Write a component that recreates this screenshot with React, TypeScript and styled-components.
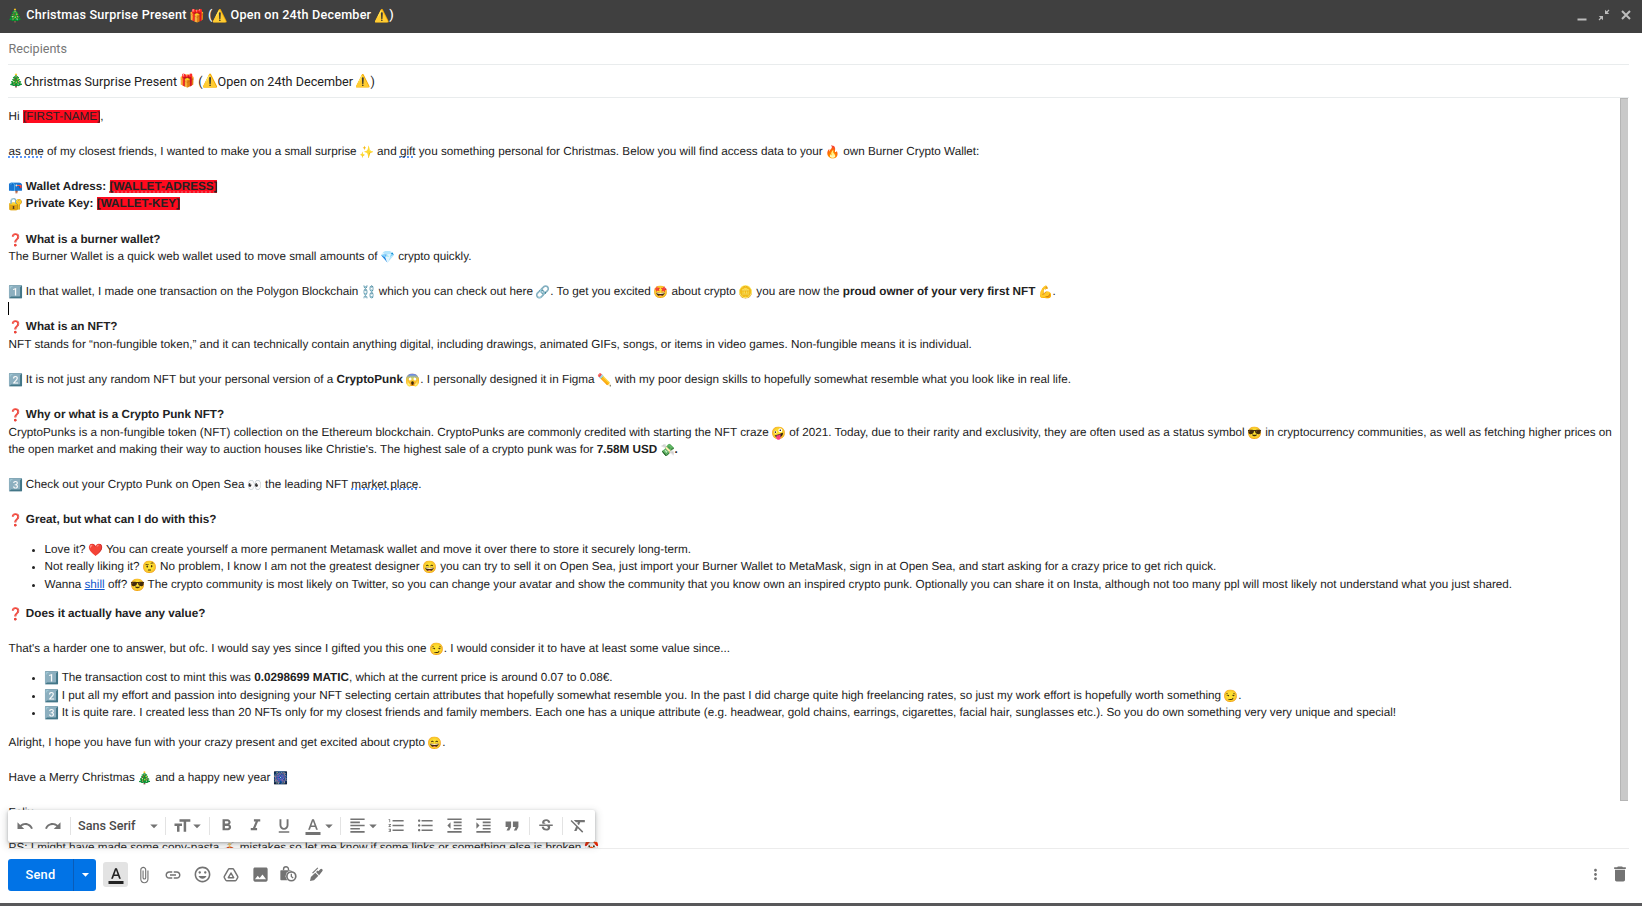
import React from 'react';
import styled, { createGlobalStyle, css } from 'styled-components';
import {
  MdUndo, MdRedo, MdFormatSize, MdFormatBold, MdFormatItalic, MdFormatUnderlined, MdFormatColorText,
  MdFormatAlignLeft, MdFormatListNumbered, MdFormatListBulleted, MdFormatIndentDecrease,
  MdFormatIndentIncrease, MdFormatQuote, MdStrikethroughS, MdFormatClear, MdArrowDropDown,
  MdAttachFile, MdLink, MdInsertPhoto, MdMoreVert, MdDelete, MdOutlineInsertEmoticon,
} from 'react-icons/md';

const GlobalStyle = createGlobalStyle`
  * { box-sizing: border-box; }
  body { margin: 0; background: #fff; overflow: hidden; }
`;

const Window = styled.div`
  display: flex;
  flex-direction: column;
  width: 1642px;
  height: 906px;
  background: #fff;
  border-bottom: 3px solid #58585a;
  color: #222;
  font-family: Roboto, "Liberation Sans", sans-serif;
`;

const TitleBar = styled.header`
  display: flex;
  align-items: center;
  justify-content: space-between;
  flex: none;
  height: 33px;
  padding: 0 9px 3px 8px;
  background: #404040;
  color: #fff;
`;

const Title = styled.h1`
  margin: 0;
  font-size: 12.6px;
  font-weight: 500;
  letter-spacing: 0.22px;
  line-height: 20px;
  white-space: pre;
`;

const WindowControls = styled.div`
  display: flex;
  align-items: center;
  gap: 8px;
  color: #bdbdbd;
  svg { display: block; width: 14px; height: 14px; }
`;

const Fields = styled.div`
  flex: none;
  margin: 0 13px 0 8px;
`;

const Field = styled.div<{ $placeholder?: boolean; $height: number }>`
  display: flex;
  align-items: center;
  height: ${p => p.$height}px;
  padding-left: ${p => (p.$placeholder ? 0.5 : 1)}px;
  border-bottom: 1px solid #e9eced;
  color: ${p => (p.$placeholder ? '#777' : '#222')};
  font-size: 12.6px;
  white-space: pre;
`;

const Body = styled.main`
  display: flex;
  flex: 1;
  min-height: 0;
  margin: 0 14px 0 8px;
  overflow: hidden;
`;

const Message = styled.article`
  flex: 1;
  padding: 10px 0 0 0.6px;
  font-family: "Liberation Sans", Arial, sans-serif;
  font-size: 11.71px;
  line-height: 17.5px;
  white-space: pre;
  text-rendering: geometricPrecision;
`;

const Line = styled.div<{ $height?: number }>`
  height: ${p => p.$height ?? 17.5}px;
`;

const List = styled.ul<{ $before: number; $after: number }>`
  margin: ${p => p.$before}px 0 ${p => p.$after}px;
  padding-left: 36px;
  li { height: 17.5px; }
`;

const Emoji = styled.span<{ $size?: number }>`
  display: inline-flex;
  align-items: center;
  justify-content: center;
  width: ${p => p.$size ?? 14}px;
  height: 14px;
  font-family: "Noto Color Emoji", sans-serif;
  font-size: ${p => (p.$size ?? 14) * 0.86}px;
  font-weight: 400;
  line-height: 14px;
  letter-spacing: 0;
  vertical-align: -1px;
`;

const Marked = styled.span`
  background: #ff0a1e;
`;

const hint = (color: string) => css`
  text-decoration: underline dotted ${color} 1.5px;
  text-underline-offset: 1px;
  text-decoration-skip-ink: none;
`;

const Grammar = styled.span`${hint('#5b97f7')}`;
const Misspelt = styled.span`${hint('#f0424f')}`;

const Link = styled.a`
  color: #15c;
  text-decoration: underline;
`;

const Caret = styled.span`
  display: inline-block;
  width: 1px;
  height: 13px;
  margin-left: -0.6px;
  background: #000;
  vertical-align: -2px;
`;

const ScrollThumb = styled.div`
  flex: none;
  width: 8px;
  height: 703px;
  border: solid #b5b5b5;
  border-width: 1px 0 1px 1px;
  background: #c9c9c9;
`;

const Footer = styled.footer`
  position: relative;
  flex: none;
  height: 55px;
  margin: 0 13px 0 8px;
  border-top: 1px solid #ececec;
`;

const FormatBar = styled.div`
  position: absolute;
  left: 0;
  top: -39px;
  display: flex;
  align-items: center;
  width: 587px;
  height: 32px;
  padding: 0 0 1px 3px;
  border-radius: 2px;
  background: #fff;
  box-shadow: 0 1px 3px rgba(60, 64, 67, 0.35), 0 3px 7px 2px rgba(60, 64, 67, 0.17);
  color: #737373;
`;

const Tool = styled.span<{ $w?: number; $icon?: number }>`
  display: flex;
  align-items: center;
  justify-content: center;
  flex: none;
  width: ${p => p.$w ?? 29}px;
  svg { flex: none; width: ${p => p.$icon ?? 18}px; height: ${p => p.$icon ?? 18}px; }
`;

const MenuArrow = styled(Tool)`
  margin-left: -6px;
`;

const Divider = styled.span`
  flex: none;
  width: 1px;
  height: 18px;
  margin: 0 3px;
  background: #e3e3e3;
`;

const FontName = styled.span`
  width: 77.5px;
  padding-left: 4px;
  color: #4a4a4a;
  font-size: 12.6px;
  font-weight: 500;
  white-space: nowrap;
`;

const Actions = styled.div`
  display: flex;
  align-items: center;
  padding-top: 9.5px;
  color: #737373;
`;

const SendButton = styled.button`
  display: flex;
  flex: none;
  width: 88px;
  height: 32px;
  margin-right: 7px;
  padding: 0;
  border: 0;
  border-radius: 3px;
  background: #0173e6;
  color: #fff;
  font: 500 12.8px Roboto, sans-serif;
  letter-spacing: 0.3px;
`;

const SendLabel = styled.span`
  display: flex;
  align-items: center;
  justify-content: center;
  width: 66px;
  border-right: 1px solid #0a5cb8;
`;

const SendMore = styled.span`
  display: flex;
  align-items: center;
  justify-content: center;
  flex: 1;
  svg { width: 17px; height: 17px; }
`;

const ActiveTool = styled(Tool)`
  height: 25px;
  margin-right: 1.5px;
  border-radius: 3px;
  background: #e3e3e3;
  color: #222;
`;

const Spacer = styled.span`flex: 1;`;

const EndTools = styled.div`
  display: flex;
  align-items: center;
  margin: -1px -3px 0 0;
`;

const E = ({ children, s }: { children: string; s?: number }) => <Emoji $size={s}>{children}</Emoji>;

const ExitFullscreen = () => (
  <svg viewBox="0 0 14 14" fill="#bdbdbd" stroke="#bdbdbd">
    <path d="M8 1.800V6h4.200zM1.800 8H6v4.200z" stroke="none" />
    <path d="M8.500 5.500 12 2M5.500 8.500 2 12" strokeWidth="1.200" />
  </svg>
);

const Drive = () => (
  <svg viewBox="0 0 24 24" fill="none" stroke="currentColor" strokeWidth="2.200" strokeLinejoin="round">
    <path d="M9.500 2.500h5q1 0 1.500 1l6 10.500q.5 1 0 2l-2 3.500q-.5 1-1.500 1h-13q-1 0-1.500-1L2 16q-.5-1 0-2L8 3.500q.5-1 1.500-1z" />
    <path d="M12 9l4 7H8z" />
  </svg>
);

const Confidential = () => (
  <svg viewBox="0 0 24 24" fill="currentColor">
    <path d="M5 6V4.500a3.500 3.500 0 0 1 7 0V6" fill="none" stroke="currentColor" strokeWidth="2" />
    <path d="M1.500 6h14a1 1 0 0 1 1 1v13h-15a1 1 0 0 1-1-1V7a1 1 0 0 1 1-1z" />
    <circle cx="16" cy="14.500" r="8" fill="#fff" />
    <circle cx="16" cy="14.500" r="6.300" fill="#fff" stroke="currentColor" strokeWidth="2.400" />
    <path d="M16 11v3.800l2.600 2" fill="none" stroke="currentColor" strokeWidth="1.800" />
  </svg>
);

const Pen = () => (
  <svg viewBox="0 0 24 24" fill="currentColor">
    <path d="M1.500 22.500l1.500-6.500 7-7 5 5-7 7z" />
    <path d="M11.200 8l2.600-2.600 1.200 1.200 3-3a2.200 2.200 0 0 1 3.200 0 2.200 2.200 0 0 1 0 3.200L16.200 13z" />
    <path d="M14.800 2l-8.500 8.500-1.300-1.300 8.500-8.500z" />
  </svg>
);

export default function App() {
  return (
    <Window>
      <GlobalStyle />
      <TitleBar>
        <Title><E s={15}>🎄</E> Christmas Surprise Present <E s={14.6}>🎁</E> (<E s={14.6}>⚠️</E> Open on 24th December <E s={14.6}>⚠️</E>)</Title>
        <WindowControls>
          <svg viewBox="0 0 14 14"><path d="M2.500 10.500h9v2h-9z" fill="#bdbdbd" /></svg>
          <ExitFullscreen />
          <svg viewBox="0 0 14 14"><path d="M3 3l8 8M11 3l-8 8" stroke="#bdbdbd" strokeWidth="2" /></svg>
        </WindowControls>
      </TitleBar>
      <Fields>
        <Field $placeholder $height={32}>Recipients</Field>
        <Field $height={33}><E s={15}>🎄</E>Christmas Surprise Present <E s={15}>🎁</E> (<E s={15}>⚠️</E>Open on 24th December <E s={14.5}>⚠️</E>)</Field>
      </Fields>
      <Body>
        <Message>
          <Line>Hi <Marked>[FIRST-NAME]</Marked>,</Line>
          <Line />
          <Line><Grammar>as one</Grammar> of my closest friends, I wanted to make you a small surprise <E>✨</E> and <Grammar>gift</Grammar> you something personal for Christmas. Below you will find access data to your <E>🔥</E> own Burner Crypto Wallet:</Line>
          <Line />
          <Line $height={17}><b><E>📪</E> Wallet Adress: <Marked><Misspelt>[WALLET-ADRESS]</Misspelt></Marked></b></Line>
          <Line $height={18}><b><E>🔐</E> Private Key: <Marked>[WALLET-KEY]</Marked></b></Line>
          <Line />
          <Line><b><E>❓</E> What is a burner wallet?</b></Line>
          <Line>The Burner Wallet is a quick web wallet used to move small amounts of <E>💎</E> crypto quickly.</Line>
          <Line />
          <Line><E>1️⃣</E> In that wallet, I made one transaction on the Polygon Blockchain <E>⛓️</E> which you can check out here <E>🔗</E>. To get you excited <E>🤩</E> about crypto <E>🪙</E> you are now the <b>proud owner of your very first NFT <E>💪</E></b>.</Line>
          <Line><Caret /></Line>
          <Line><b><E>❓</E> What is an NFT?</b></Line>
          <Line>NFT stands for “non-fungible token,” and it can technically contain anything digital, including drawings, animated GIFs, songs, or items in video games. Non-fungible means it is individual.</Line>
          <Line />
          <Line><E>2️⃣</E> It is not just any random NFT but your personal version of a <b>CryptoPunk</b> <E>😱</E>. I personally designed it in Figma <E>✏️</E> with my poor design skills to hopefully somewhat resemble what you look like in real life.</Line>
          <Line />
          <Line $height={18.2}><b><E>❓</E> Why or what is a Crypto Punk NFT?</b></Line>
          <Line $height={17.1}>CryptoPunks is a non-fungible token (NFT) collection on the Ethereum blockchain. CryptoPunks are commonly credited with starting the NFT craze <E>🤪</E> of 2021. Today, due to their rarity and exclusivity, they are often used as a status symbol <E>😎</E> in cryptocurrency communities, as well as fetching higher prices on</Line>
          <Line>the open market and making their way to auction houses like Christie's. The highest sale of a crypto punk was for <b>7.58M USD <E>💸</E>.</b></Line>
          <Line />
          <Line><E>3️⃣</E> Check out your Crypto Punk on Open Sea <E>👀</E> the leading NFT <Grammar>market place</Grammar>.</Line>
          <Line />
          <Line><b><E>❓</E> Great, but what can I do with this?</b></Line>
          <List $before={12.7} $after={11.5}>
            <li>Love it? <E>❤️</E> You can create yourself a more permanent Metamask wallet and move it over there to store it securely long-term.</li>
            <li>Not really liking it? <E>🤨</E> No problem, I know I am not the greatest designer <E>😄</E> you can try to sell it on Open Sea, just import your Burner Wallet to MetaMask, sign in at Open Sea, and start asking for a crazy price to get rich quick.</li>
            <li>Wanna <Link>shill</Link> off? <E>😎</E> The crypto community is most likely on Twitter, so you can change your avatar and show the community that you know own an inspired crypto punk. Optionally you can share it on Insta, although not too many ppl will most likely not understand what you just shared.</li>
          </List>
          <Line><b><E>❓</E> Does it actually have any value?</b></Line>
          <Line />
          <Line>That's a harder one to answer, but ofc. I would say yes since I gifted you this one <E>😏</E>. I would consider it to have at least some value since...</Line>
          <List $before={11.8} $after={12.7}>
            <li><E>1️⃣</E> The transaction cost to mint this was <b>0.0298699 MATIC</b>, which at the current price is around 0.07 to 0.08€.</li>
            <li><E>2️⃣</E> I put all my effort and passion into designing your NFT selecting certain attributes that hopefully somewhat resemble you. In the past I did charge quite high freelancing rates, so just my work effort is hopefully worth something <E>😏</E>.</li>
            <li><E>3️⃣</E> It is quite rare. I created less than 20 NFTs only for my closest friends and family members. Each one has a unique attribute (e.g. headwear, gold chains, earrings, cigarettes, facial hair, sunglasses etc.). So you do own something very very unique and special!</li>
          </List>
          <Line>Alright, I hope you have fun with your crazy present and get excited about crypto <E>😄</E>.</Line>
          <Line />
          <Line>Have a Merry Christmas <E>🎄</E> and a happy new year <E>🎆</E></Line>
          <Line />
          <Line>Felix</Line>
          <Line />
          <Line>PS: I might have made some copy-pasta <E>🍝</E> mistakes so let me know if some links or something else is broken <E>🤡</E></Line>
        </Message>
        <ScrollThumb />
      </Body>
      <Footer>
        <FormatBar>
          <Tool $w={28}><MdUndo /></Tool>
          <Tool $w={28}><MdRedo /></Tool>
          <Divider />
          <FontName>Sans Serif</FontName>
          <MenuArrow $w={16.5}><MdArrowDropDown /></MenuArrow>
          <Divider />
          <Tool $w={25} $icon={20}><MdFormatSize /></Tool>
          <MenuArrow $w={18}><MdArrowDropDown /></MenuArrow>
          <Divider />
          <Tool $w={27.5} $icon={19}><MdFormatBold /></Tool>
          <Tool $icon={19}><MdFormatItalic /></Tool>
          <Tool><MdFormatUnderlined /></Tool>
          <Tool><MdFormatColorText /></Tool>
          <MenuArrow $w={15.5}><MdArrowDropDown /></MenuArrow>
          <Divider />
          <Tool $w={27} $icon={19}><MdFormatAlignLeft /></Tool>
          <MenuArrow $w={16.5}><MdArrowDropDown /></MenuArrow>
          <Tool $icon={19}><MdFormatListNumbered /></Tool>
          <Tool $icon={19}><MdFormatListBulleted /></Tool>
          <Tool $icon={19}><MdFormatIndentDecrease /></Tool>
          <Tool $icon={19}><MdFormatIndentIncrease /></Tool>
          <Tool $w={28} $icon={22}><MdFormatQuote /></Tool>
          <Divider />
          <Tool $w={26}><MdStrikethroughS /></Tool>
          <Divider />
          <Tool $w={26} $icon={19}><MdFormatClear /></Tool>
        </FormatBar>
        <Actions>
          <SendButton>
            <SendLabel>Send</SendLabel>
            <SendMore><MdArrowDropDown /></SendMore>
          </SendButton>
          <ActiveTool $w={25}><MdFormatColorText /></ActiveTool>
          <Tool><MdAttachFile /></Tool>
          <Tool><MdLink /></Tool>
          <Tool $icon={19}><MdOutlineInsertEmoticon /></Tool>
          <Tool $icon={16}><Drive /></Tool>
          <Tool $icon={19}><MdInsertPhoto /></Tool>
          <Tool $w={28} $icon={17}><Confidential /></Tool>
          <Tool $w={28} $icon={15}><Pen /></Tool>
          <Spacer />
          <EndTools>
            <Tool $w={24} $icon={17}><MdMoreVert /></Tool>
            <Tool $w={25} $icon={20}><MdDelete /></Tool>
          </EndTools>
        </Actions>
      </Footer>
    </Window>
  );
}
